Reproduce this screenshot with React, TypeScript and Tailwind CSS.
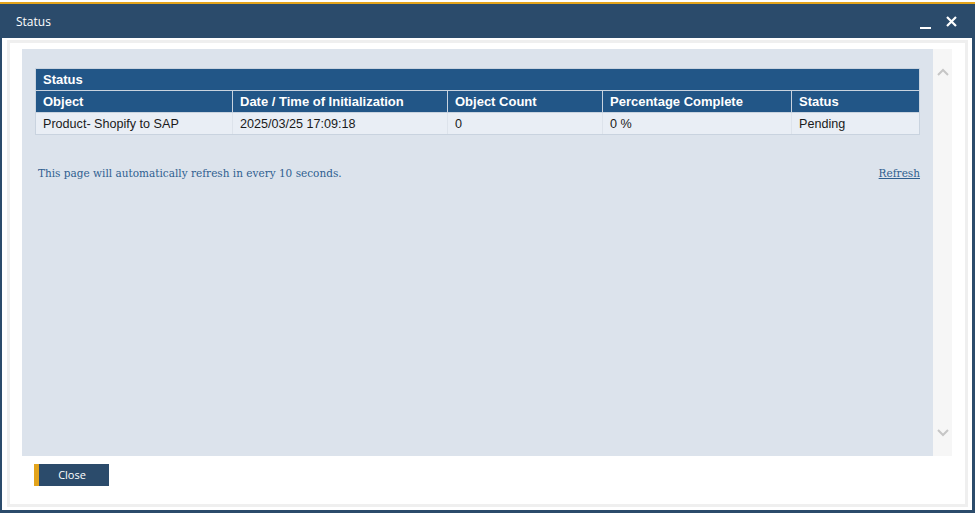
import React from 'react';

const columns = [
  { label: 'Object', width: 'w-[196px]', value: 'Product- Shopify to SAP' },
  { label: 'Date / Time of Initialization', width: 'w-[215px]', value: '2025/03/25 17:09:18' },
  { label: 'Object Count', width: 'w-[155px]', value: '0' },
  { label: 'Percentage Complete', width: 'w-[189px]', value: '0 %' },
  { label: 'Status', width: 'flex-1', value: 'Pending' },
];

export default function App() {
  return (
    <div className="w-[975px] h-[513px] bg-white flex flex-col overflow-hidden font-['Open_Sans',sans-serif]">
      <div className="h-[2px] bg-white" />
      <div className="h-[2px] bg-[#e3a41c]" />
      <div className="flex-1 flex flex-col bg-[#2b4b6b] pl-[2px] pr-[3px] pb-[3px]">
        {/* title bar */}
        <div className="h-[34px] flex items-center justify-between pl-[14px] pr-[15px] text-white">
          <span className="text-[12px] leading-none mt-[1px]">Status</span>
          <div className="flex items-center gap-[14px]">
            <svg width="12" height="12" viewBox="0 0 12 12" className="mt-[6px]">
              <rect x="0" y="9" width="11" height="2" fill="#fff" />
            </svg>
            <svg width="11" height="11" viewBox="0 0 11 11">
              <path d="M1 1 L10 10 M10 1 L1 10" stroke="#fff" strokeWidth="2.2" />
            </svg>
          </div>
        </div>

        {/* body */}
        <div className="flex-1 bg-white pt-[2px] pl-[5px] pr-[4px] pb-[3px] flex flex-col">
          <div className="flex-1 border-[3px] border-[#efefef] flex flex-col pl-[12px] pr-[13px] pt-[6px]">
            <div className="h-[407px] flex">
              <div className="flex-1 bg-[#dce3ec] pt-[19px] pl-[13px] pr-[13px]">
                {/* table */}
                <div className="font-['Liberation_Sans',Arial,sans-serif] border border-[#c9d3df] bg-[#c9d3df]">
                  <div className="h-[21px] bg-[#225687] text-white text-[13px] font-bold flex items-center px-[7px]">
                    Status
                  </div>
                  <div className="flex mt-[1px] bg-[#225687]">
                    {columns.map((c, i) => (
                      <div
                        key={c.label}
                        className={`${c.width} h-[21px] flex items-center px-[7px] text-white text-[13px] font-bold ${i > 0 ? 'border-l border-[#c9d3df]' : ''}`}
                      >
                        {c.label}
                      </div>
                    ))}
                  </div>
                  <div className="flex mt-[1px] bg-[#e9eef5]">
                    {columns.map((c, i) => (
                      <div
                        key={c.label}
                        className={`${c.width} h-[21px] flex items-center pt-[1px] px-[7px] text-[12.6px] text-[#1a1a1a] ${i > 0 ? 'border-l border-[#dde3eb]' : ''}`}
                      >
                        {c.value}
                      </div>
                    ))}
                  </div>
                </div>

                <div className="mt-[31px] flex justify-between items-center pl-[3px] font-['DejaVu_Serif',serif] text-[10.5px] text-[#2f5f90]">
                  <span>This page will automatically refresh in every 10 seconds.</span>
                  <a href="#" className="underline">Refresh</a>
                </div>
              </div>

              {/* scrollbar */}
              <div className="w-[19px] bg-[#f6f6f6] flex flex-col items-center justify-between pt-[19px] pb-[19px]">
                <svg width="12" height="8" viewBox="0 0 12 8">
                  <path d="M1 7 L6 2 L11 7" fill="none" stroke="#c6c6c6" strokeWidth="2" />
                </svg>
                <svg width="12" height="8" viewBox="0 0 12 8">
                  <path d="M1 1 L6 6 L11 1" fill="none" stroke="#c6c6c6" strokeWidth="2" />
                </svg>
              </div>
            </div>

            <div className="pl-[12px] pt-[8px]">
              <button
                type="button"
                className="w-[75px] h-[22px] bg-[#2b4b6b] border-l-[5px] border-[#e3a41c] text-white text-[11px] flex items-center justify-center pr-[4px]"
              >
                Close
              </button>
            </div>
          </div>
        </div>
      </div>
    </div>
  );
}
